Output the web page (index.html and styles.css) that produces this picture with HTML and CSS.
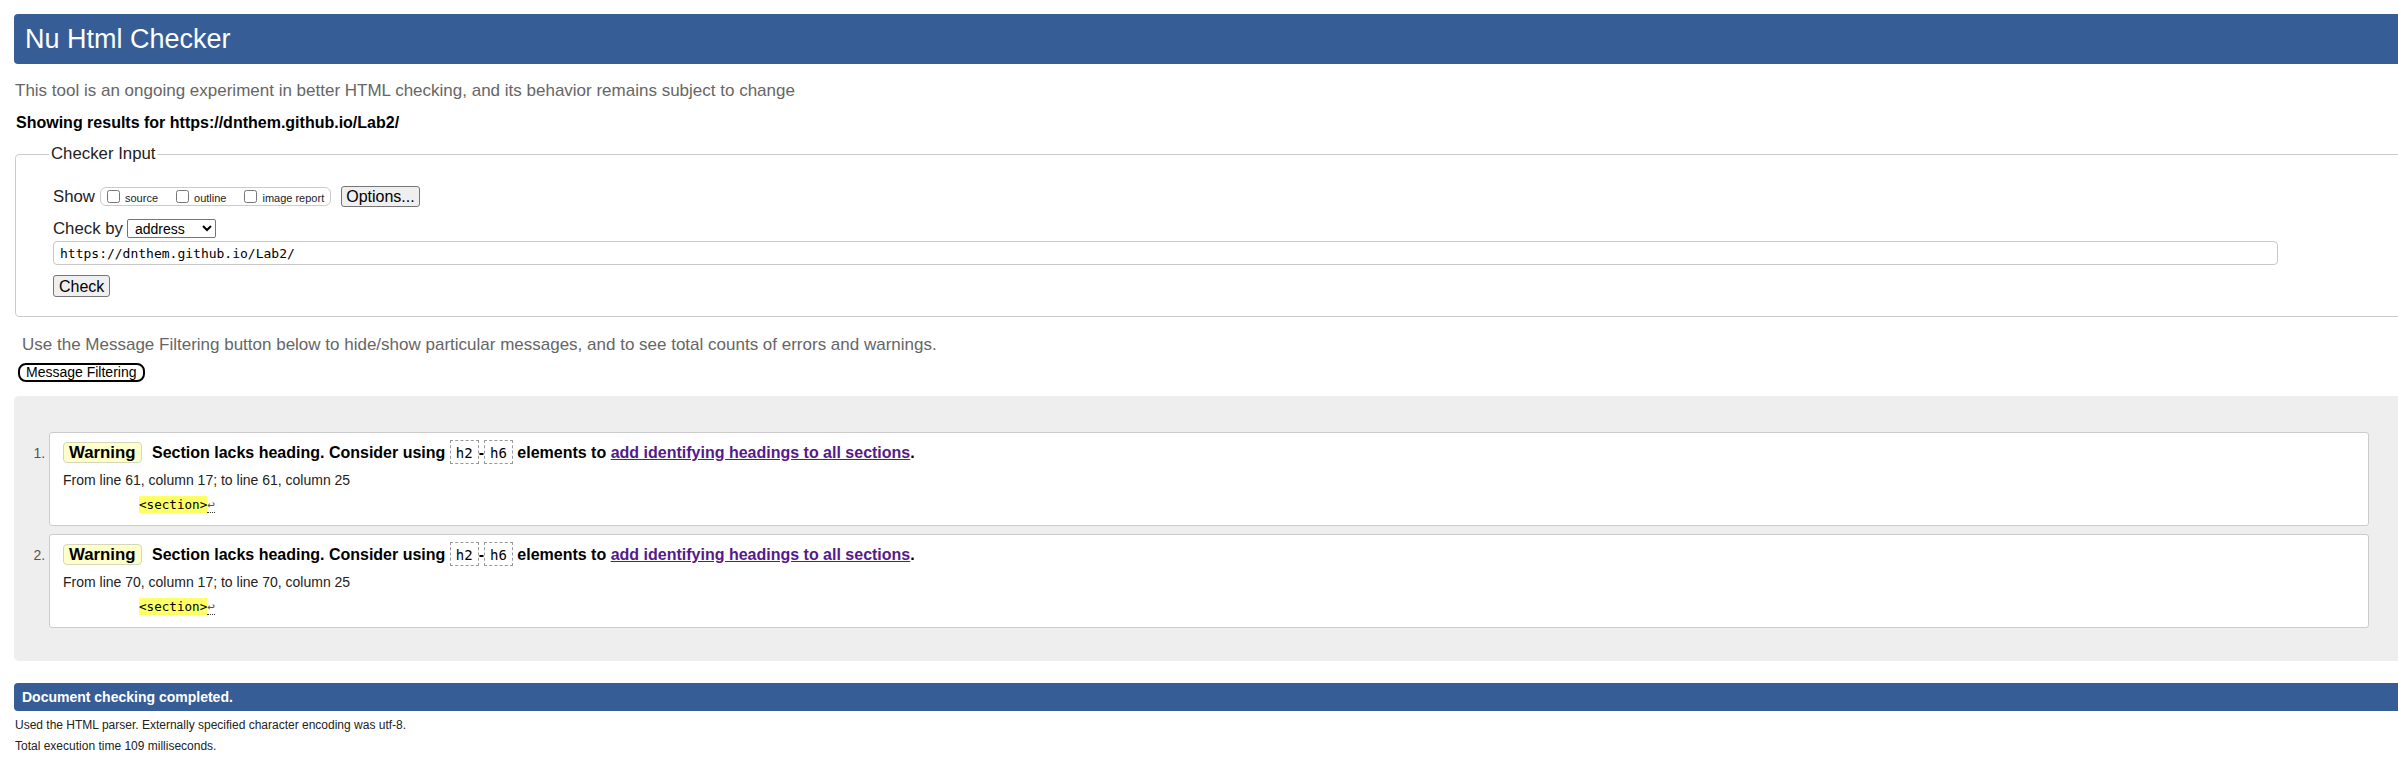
FILE: index.html
```html
<!DOCTYPE html>
<html lang="en">
<head>
<meta charset="utf-8">
<title>Showing results for https://dnthem.github.io/Lab2/ - Nu Html Checker</title>
<link rel="stylesheet" href="styles.css">
</head>
<body>
<div class="page">
  <h1 class="title">Nu Html Checker</h1>
  <p class="intro">This tool is an ongoing experiment in better HTML checking, and its behavior remains subject to change</p>
  <p class="showing">Showing results for https://dnthem.github.io/Lab2/</p>

  <form class="checker">
    <fieldset class="checker-input">
      <legend>Checker Input</legend>
      <div class="row row-show">
        <span class="label">Show</span>
        <span class="show-group">
          <label class="opt"><input type="checkbox"><span>source</span></label>
          <label class="opt"><input type="checkbox"><span>outline</span></label>
          <label class="opt"><input type="checkbox"><span>image report</span></label>
        </span>
        <button type="button" class="btn btn-options">Options...</button>
      </div>
      <div class="row row-by">
        <span class="label">Check by</span>
        <select class="by"><option>address</option></select>
      </div>
      <input class="url" type="text" value="https://dnthem.github.io/Lab2/">
      <div class="row row-submit">
        <button type="button" class="btn btn-check">Check</button>
      </div>
    </fieldset>
  </form>

  <p class="filter-note">Use the Message Filtering button below to hide/show particular messages, and to see total counts of errors and warnings.</p>
  <button type="button" class="filter-btn">Message Filtering</button>

  <div class="results">
    <ol class="messages">
      <li class="msg">
        <p class="msg-line"><strong class="badge">Warning</strong> <span>Section lacks heading. Consider using <code>h2</code>-<code>h6</code> elements to <a href="#" class="ref">add identifying headings to all sections</a>.</span></p>
        <p class="loc">From line 61, column 17; to line 61, column 25</p>
        <p class="extract"><code><b class="hl">&lt;section&gt;</b><span class="lf">↩</span></code></p>
      </li>
      <li class="msg">
        <p class="msg-line"><strong class="badge">Warning</strong> <span>Section lacks heading. Consider using <code>h2</code>-<code>h6</code> elements to <a href="#" class="ref">add identifying headings to all sections</a>.</span></p>
        <p class="loc">From line 70, column 17; to line 70, column 25</p>
        <p class="extract"><code><b class="hl">&lt;section&gt;</b><span class="lf">↩</span></code></p>
      </li>
    </ol>
  </div>

  <h2 class="done">Document checking completed.</h2>
  <p class="meta meta-first">Used the HTML parser. Externally specified character encoding was utf-8.</p>
  <p class="meta">Total execution time 109 milliseconds.</p>
</div>
</body>
</html>
```

FILE: styles.css
```css
html {
  overflow: hidden;
}

body {
  margin: 0;
  background: #fff;
  color: #000;
  font-family: "Liberation Sans", Arial, sans-serif;
}

.page {
  margin-left: 14px;
  width: 2440px;
}

/* Header */
.title {
  margin: 14px 0 0;
  height: 50px;
  line-height: 50px;
  padding-left: 11px;
  background: #365d95;
  color: #fff;
  font-size: 27px;
  font-weight: normal;
  border-radius: 4px;
}

.intro {
  margin: 17px 0 0;
  padding-left: 1px;
  font-size: 17px;
  line-height: 20px;
  color: #666;
}

.showing {
  margin: 13px 0 0;
  padding-left: 2px;
  font-size: 16px;
  line-height: 18px;
  font-weight: bold;
}

/* Checker input */
.checker {
  margin: 12px 0 0;
}

.checker-input {
  margin: 0 0 0 1px;
  padding: 22px 0 19px 37px;
  border: 1px solid #ccc;
  border-radius: 4px;
  min-width: 0;
}

.checker-input legend {
  margin-left: -4px;
  padding: 0 2px;
  font-size: 16.8px;
  line-height: 20px;
  color: #222;
}

.row {
  display: flex;
  align-items: center;
  height: 21px;
}

.label {
  font-size: 16.8px;
  line-height: 21px;
  color: #222;
}

.show-group {
  display: flex;
  align-items: center;
  gap: 18px;
  height: 17px;
  margin-left: 5px;
  padding: 0 6px;
  border: 1px solid #ccc;
  border-radius: 6px;
}

.opt {
  display: flex;
  align-items: center;
  gap: 5px;
  font-size: 11px;
  color: #222;
}

.opt input {
  margin: 0;
  width: 13px;
  height: 13px;
}

.opt span {
  padding-top: 2px;
}

.btn {
  height: 21px;
  padding: 0 4px;
  border: 1px solid #767676;
  border-radius: 3px;
  background: #efefef;
  color: #000;
  font-family: "Liberation Sans", Arial, sans-serif;
  font-size: 16px;
  line-height: 19px;
}

.btn-options {
  margin-left: 10px;
}

.row-by {
  margin-top: 11px;
}

.by {
  margin-left: 4px;
  width: 89px;
  height: 19px;
  padding: 0 0 0 3px;
  border: 1px solid #767676;
  border-radius: 2px;
  background: #fff;
  color: #000;
  font-family: "Liberation Sans", Arial, sans-serif;
  font-size: 14px;
}

.url {
  display: block;
  box-sizing: border-box;
  margin-top: 2px;
  width: 2225px;
  height: 24px;
  padding: 0 6px;
  border: 1px solid #c8c8c8;
  border-radius: 4px;
  font-family: "DejaVu Sans Mono", "Liberation Mono", monospace;
  font-size: 13px;
  color: #000;
}

.row-submit {
  margin-top: 10px;
  height: 22px;
}

.btn-check {
  height: 22px;
  padding: 0 5px;
}

/* Filter */
.filter-note {
  margin: 18px 0 0;
  padding-left: 8px;
  font-size: 17px;
  line-height: 20px;
  color: #666;
}

.filter-btn {
  display: block;
  margin: 8px 0 0 4px;
  height: 19px;
  padding: 0 6px;
  border: 2px solid #000;
  border-radius: 8px;
  background: #fff;
  color: #000;
  font-family: "Liberation Sans", Arial, sans-serif;
  font-size: 14px;
  line-height: 15px;
}

/* Results */
.results {
  margin-top: 14px;
  padding: 36px 85px 33px 0;
  background: #eee;
  border-radius: 5px;
}

.messages {
  margin: 0;
  padding: 0 0 0 35px;
  list-style: decimal outside;
}

.msg {
  padding: 0 13px 11px;
  background: #fff;
  border: 1px solid #ccc;
  border-radius: 3px;
  font-size: 14px;
}

.msg + .msg {
  margin-top: 8px;
}

.msg::marker {
  color: #555;
}

.msg-line {
  margin: 8px 0 0;
  height: 24px;
  font-size: 16px;
  line-height: 24px;
  font-weight: bold;
}

.badge {
  display: inline-block;
  margin-right: 6px;
  padding: 0 5px;
  border: 1px solid #d6d6b8;
  border-radius: 4px;
  background: #ffffcc;
  font-size: 16.8px;
  line-height: 19px;
}

.msg-line code {
  padding: 4px 5px 2px;
  border: 1px dashed #999;
  font-family: "DejaVu Sans Mono", "Liberation Mono", monospace;
  font-size: 14px;
  line-height: 16px;
  font-weight: normal;
}

.ref {
  color: #551a8b;
  text-decoration: underline;
}

.loc {
  margin: 6px 0 0;
  font-size: 14px;
  line-height: 18px;
  color: #222;
}

.extract {
  margin: 7px 0 0 76px;
  height: 18px;
  font-family: "DejaVu Sans Mono", "Liberation Mono", monospace;
  font-size: 12.6px;
  line-height: 18px;
}

.extract code {
  font-family: inherit;
  font-size: inherit;
}

.hl {
  padding: 1px 0;
  background: #ffff66;
  font-weight: normal;
}

.lf {
  color: #555;
  border-bottom: 1px dotted #333;
}

/* Footer */
.done {
  margin: 22px 0 0;
  height: 28px;
  padding-left: 8px;
  background: #365d95;
  color: #fff;
  font-size: 14px;
  line-height: 28px;
  font-weight: bold;
  border-radius: 4px;
}

.meta {
  margin: 5px 0 0;
  padding-left: 1px;
  font-size: 12px;
  line-height: 16px;
  color: #222;
}

.meta-first {
  margin-top: 6px;
}
```
